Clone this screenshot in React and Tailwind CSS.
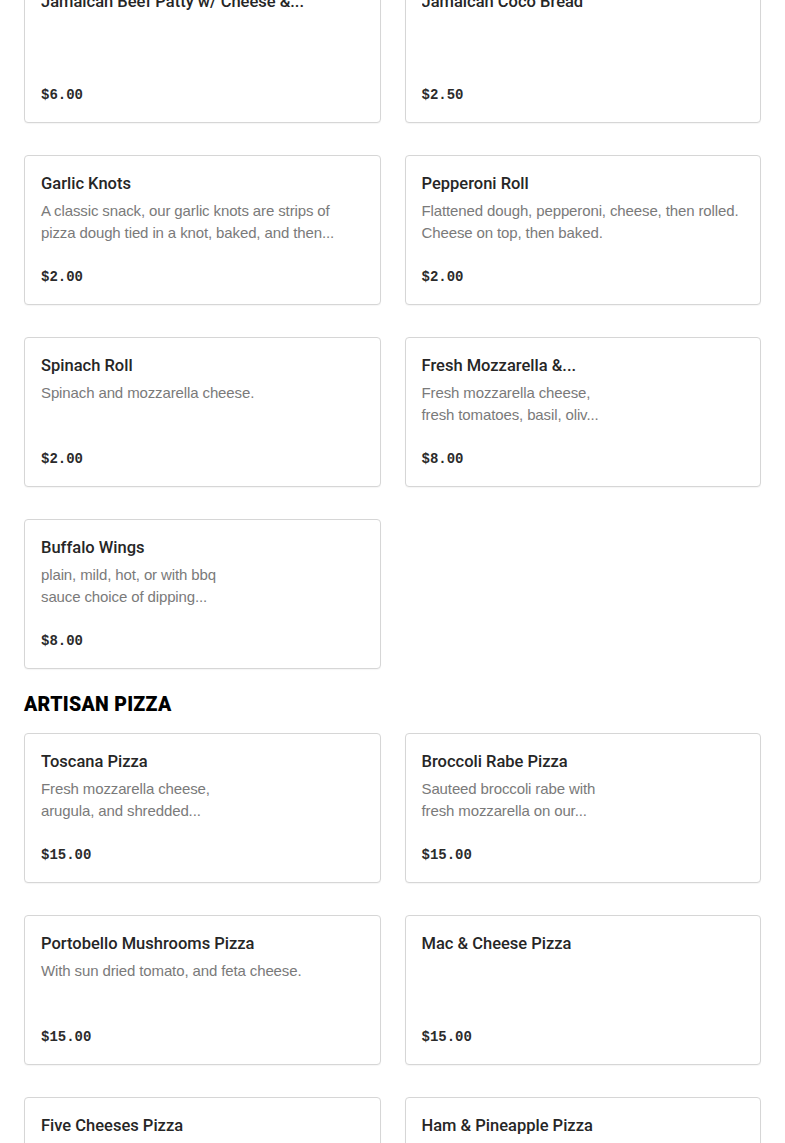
const sections = [
  {
    title: null,
    items: [
      { name: "Jamaican Beef Patty w/ Cheese &...", desc: [], price: "$6.00" },
      { name: "Jamaican Coco Bread", desc: [], price: "$2.50" },
      {
        name: "Garlic Knots",
        desc: ["A classic snack, our garlic knots are strips of", "pizza dough tied in a knot, baked, and then..."],
        price: "$2.00",
      },
      {
        name: "Pepperoni Roll",
        desc: ["Flattened dough, pepperoni, cheese, then rolled.", "Cheese on top, then baked."],
        price: "$2.00",
      },
      { name: "Spinach Roll", desc: ["Spinach and mozzarella cheese."], price: "$2.00" },
      {
        name: "Fresh Mozzarella &...",
        desc: ["Fresh mozzarella cheese,", "fresh tomatoes, basil, oliv..."],
        price: "$8.00",
      },
      {
        name: "Buffalo Wings",
        desc: ["plain, mild, hot, or with bbq", "sauce choice of dipping..."],
        price: "$8.00",
      },
    ],
  },
  {
    title: "Artisan Pizza",
    items: [
      {
        name: "Toscana Pizza",
        desc: ["Fresh mozzarella cheese,", "arugula, and shredded..."],
        price: "$15.00",
      },
      {
        name: "Broccoli Rabe Pizza",
        desc: ["Sauteed broccoli rabe with", "fresh mozzarella on our..."],
        price: "$15.00",
      },
      {
        name: "Portobello Mushrooms Pizza",
        desc: ["With sun dried tomato, and feta cheese."],
        price: "$15.00",
      },
      { name: "Mac & Cheese Pizza", desc: [], price: "$15.00" },
      { name: "Five Cheeses Pizza", desc: [], price: "$15.00" },
      { name: "Ham & Pineapple Pizza", desc: [], price: "$15.00" },
    ],
  },
];

function MenuCard({ item }) {
  return (
    <div className="bg-white border border-[#d6d6d6] rounded-[4px] px-4 py-4 shadow-[0_1px_1px_rgba(0,0,0,0.04)]">
      <h3 className="text-[16.5px] leading-6 font-medium text-[#262626] whitespace-nowrap overflow-hidden font-['Roboto',sans-serif]">
        {item.name}
      </h3>
      <div className="mt-1 h-[44px] text-[15px] leading-[22px] tracking-[-0.12px] text-[#7a7a7a]">
        {item.desc.map((line, i) => (
          <div key={i} className="whitespace-nowrap">{line}</div>
        ))}
      </div>
      <p className="mt-[22px] text-[14px] leading-[22px] font-bold text-[#2b2b2b] font-['Liberation_Mono',monospace]">
        {item.price}
      </p>
    </div>
  );
}

export default function App() {
  return (
    <div className="bg-white min-h-screen overflow-hidden font-['Liberation_Sans',Arial,sans-serif]">
      <div className="px-6 -mt-[27px]">
        {sections.map((section, idx) => (
          <div key={idx}>
            {section.title && (
              <h2 className="mt-[24px] mb-[16px] text-[19.5px] leading-6 font-black uppercase tracking-[0.3px] text-black font-['Roboto',sans-serif]">
                {section.title}
              </h2>
            )}
            <div className="grid grid-cols-2 gap-x-6 gap-y-8">
              {section.items.map((item) => (
                <MenuCard key={item.name} item={item} />
              ))}
            </div>
          </div>
        ))}
      </div>
    </div>
  );
}
